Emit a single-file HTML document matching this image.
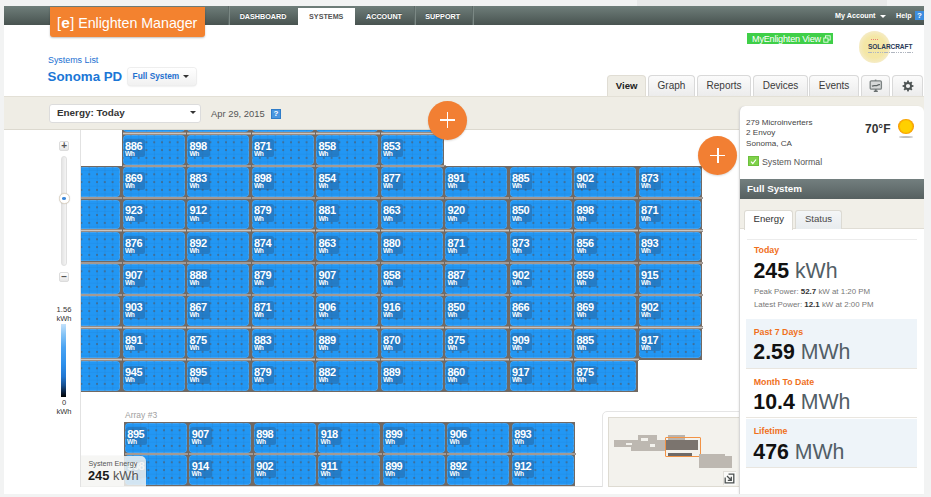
<!DOCTYPE html><html><head><meta charset="utf-8"><style>
*{margin:0;padding:0;box-sizing:border-box}
html,body{width:931px;height:497px;overflow:hidden;background:#f2f3f3;font-family:"Liberation Sans",sans-serif;position:relative}
.a{position:absolute}
#topdark{left:637px;top:0;width:250px;height:6px;background:#e8e9e9}
#page{left:4px;top:6px;width:920px;height:488px;background:#fff}
#hdr{left:4px;top:6px;width:920px;height:19px;background:linear-gradient(#6f7e7a,#485350);}
#logo{left:49.5px;top:7px;width:155px;height:29.5px;background:#f3822f;border-radius:0 0 3px 3px;box-shadow:0 1px 2px rgba(0,0,0,.25);color:#fff;font-size:14.3px;line-height:31px;padding-left:7.5px;white-space:nowrap;letter-spacing:-0.05px}
#logo b{font-weight:bold;font-size:15.5px;margin:0 0.4px}
.sep{top:6px;width:1px;height:19px;background:#5d6a67;box-shadow:1px 0 0 #7b8884}
.nav{top:6px;height:19px;color:#fff;font-weight:bold;font-size:7.2px;line-height:21.5px;text-align:center;text-shadow:0 -1px 0 rgba(0,0,0,.3)}
#systab{left:298px;top:8px;width:56.5px;height:17px;background:#fff;color:#555;font-weight:bold;font-size:7.2px;line-height:18px;text-align:center}
#acct{left:835px;top:6px;height:19px;line-height:20.5px;color:#fff;font-weight:bold;font-size:7.2px;white-space:nowrap}
#help{left:896px;top:6px;height:19px;line-height:20.5px;color:#fff;font-weight:bold;font-size:7.2px}
#helpq{left:915.4px;top:11.3px;width:8.3px;height:9px;background:#3d8ee0;color:#fff;font-weight:bold;font-size:8px;line-height:9px;text-align:center;overflow:hidden}
#mev{left:747px;top:33.2px;width:86.4px;height:11.3px;background:#3fcf48;color:#fff;font-size:9.1px;line-height:13px;padding-left:5px;white-space:nowrap;letter-spacing:-0.2px}
#sl{left:48px;top:55.3px;color:#1a70d2;font-size:8.9px;line-height:11px;white-space:nowrap}
#son{left:47.6px;top:68.8px;color:#1b76d6;font-size:13.3px;font-weight:bold;line-height:16px;white-space:nowrap}
#fsb{left:127.6px;top:67.8px;width:68px;height:17.5px;border-radius:3px;background:linear-gradient(#fff,#f1f1f1);box-shadow:0 0 0 1px #eeeeee,0 1px 2px rgba(0,0,0,.18);color:#1f70cf;font-weight:bold;font-size:8.3px;line-height:17px;padding-left:5px;white-space:nowrap}
.caret{width:0;height:0;border-left:3px solid transparent;border-right:3px solid transparent;border-top:3px solid #444}
.tab{top:74.5px;height:21.5px;border:1px solid #d9d9d9;border-bottom:none;border-radius:4px 4px 0 0;background:linear-gradient(#fbfbfb,#ececec);color:#3a3a3a;font-size:10px;line-height:19px;text-align:center;white-space:nowrap}
#tview{background:#efede5;border-color:#e0ddd4;color:#222;font-weight:bold;font-size:9.6px}
#tbar{left:4px;top:96px;width:920px;height:34px;background:#efede5;border-top:1px solid #e3e0d6;border-bottom:1px solid #dcd9cf}
#dd{left:49px;top:103.6px;width:152px;height:19px;background:#fff;border:1px solid #dcdcdc;border-radius:3px;color:#333;font-weight:bold;font-size:9.9px;line-height:15.5px;padding-left:7px;white-space:nowrap}
#date{left:211px;top:107.6px;color:#555;font-size:9.4px;line-height:12px;white-space:nowrap}
#dq{left:270.7px;top:108.9px;width:10.3px;height:10.1px;background:#4996df;border:1px solid #2f7cc8;color:#fff;font-weight:bold;font-size:8px;line-height:8.5px;text-align:center}
#leftcol{left:4px;top:130px;width:77px;height:357px;background:#fff;border-right:1px solid #e2e2e2}
#zplus,#zminus{left:58.9px;width:10.5px;height:10px;background:linear-gradient(#fff,#e6e6e6);border:1px solid #dcdcdc;border-radius:2px;color:#555;font-weight:bold;font-size:10px;line-height:8px;text-align:center}
#zplus{top:140.5px}
#zminus{top:272px}
#track{left:61px;top:156px;width:6.4px;height:110px;background:linear-gradient(90deg,#e4e4e4,#f4f4f4);border:1px solid #e0e0e0;border-radius:3px}
#knob{left:59px;top:193.3px;width:10.5px;height:10.5px;border-radius:50%;background:#fff;border:1px solid #e0d7c8;box-shadow:0 0 1px rgba(0,0,0,.2)}
#knob:after{content:"";position:absolute;left:2.2px;top:3.2px;width:4.2px;height:2.6px;border-radius:50%;background:#3b87d8}
.lg{left:50px;width:28px;text-align:center;color:#333;font-size:7.6px;line-height:8.5px}
#cbar{left:61.3px;top:324px;width:5px;height:73px;background:linear-gradient(#c4e2fb,#86c4f6 14%,#4aa3f2 32%,#2d90ec 55%,#2277d2 72%,#17508f 84%,#0b2240 93%,#000)}
#vp{left:81px;top:130px;width:658px;height:357px;overflow:hidden;background:#fff}
.cell{position:absolute;background:#716963}
.band:before{content:'';position:absolute;left:1px;top:0;width:100%;height:2.6px;background:linear-gradient(#7e7068,#c9c4bf 50%,#7e7068)}
.pn{position:absolute;width:62.4px;height:29.7px;border-radius:4px;background-color:#2297f4;box-shadow:inset 0 0 0 0.7px rgba(150,200,240,.35);
 background-image:radial-gradient(circle at 50% 50%,rgba(85,85,90,.75) 0,rgba(85,85,90,.55) 0.7px,rgba(0,0,0,0) 1.3px),linear-gradient(90deg,rgba(30,90,150,.12) 0.8px,transparent 0.8px),linear-gradient(rgba(30,90,150,.1) 0.8px,transparent 0.8px);
 background-size:7.8px 7.8px,7.8px 7.8px,7.8px 7.8px;background-position:-3.9px 3.4px,-0.3px 0,0 3.05px}
.bd{position:absolute;left:1.0px;top:4.6px;width:21.5px;height:18px;background:rgba(40,70,110,.32);border-radius:2.5px;color:#fff}
.bd b{position:absolute;left:1.6px;top:1.4px;font-size:11px;line-height:10px;font-weight:bold;letter-spacing:-0.4px}
.bd i{position:absolute;left:1.4px;top:10.5px;font-style:normal;font-weight:bold;font-size:6.6px;line-height:7px;letter-spacing:-0.3px}
.plus{width:39.3px;height:39.3px;border-radius:50%;background:#f27f33;box-shadow:0 1px 2px rgba(0,0,0,.15)}
.plus:before{content:"";position:absolute;left:11.7px;top:18.7px;width:15.6px;height:1.7px;background:#fff}
.plus:after{content:"";position:absolute;left:18.7px;top:11.7px;width:1.7px;height:15.6px;background:#fff}
#a3{left:44px;top:279.5px;color:#a0a0a0;font-size:8.5px;line-height:11px}
#sysE{left:0px;top:326px;width:65px;height:30.5px;background:rgba(244,244,242,.84);border-radius:0 5px 0 0;box-shadow:0 0 1px rgba(0,0,0,.25)}
#sysE .t{position:absolute;left:7.5px;top:3px;color:#555;font-size:7.2px;line-height:9px;white-space:nowrap}
#sysE .v{position:absolute;left:7px;top:13px;color:#555;font-size:12.8px;line-height:14px;white-space:nowrap}
#sysE .v b{color:#1a1a1a}
#mm{left:521px;top:281px;width:140px;height:80px;background:#fff;border:1px solid #e5e5e5;border-radius:5px 0 0 0}
#mmi{left:526.6px;top:286.6px;width:132px;height:70.2px;background:#f3f2ed;border:1px solid #dedbd2}
#side{left:739px;top:106px;width:185px;height:388px;background:#fff;border-left:1px solid #d8d8d8;border-radius:6px 6px 0 0;box-shadow:-1px 0 2px rgba(0,0,0,.06)}
.st{color:#444;font-size:8.1px;line-height:10.5px;white-space:nowrap}
#fsbar{left:740px;top:178.8px;width:184px;height:20.5px;background:linear-gradient(#737f7f,#566060);color:#fff;font-weight:bold;font-size:9.8px;line-height:19.5px;padding-left:7px}
#tabsbg{left:740px;top:199.3px;width:184px;height:29.5px;background:#f1efe8;border-bottom:1px solid #e0ddd5}
.etab{top:210.3px;height:19px;border:1px solid #dcdad3;border-bottom:none;border-radius:3px 3px 0 0;font-size:9.6px;line-height:17px;text-align:center;color:#333}
.lbl{color:#f0701c;font-weight:bold;font-size:8.8px;line-height:11px;white-space:nowrap}
.big{color:#111;font-size:21.3px;line-height:22px;white-space:nowrap}
.big b{font-weight:bold}
.big span{color:#525e66}
.box{left:746.4px;width:171px;background:#eef4f9;border-bottom:1px solid #e9e6e0}
.pp{color:#777;font-size:7.9px;line-height:10px;white-space:nowrap}
.pp b{color:#333}
</style></head><body>
<div class="a" id="topdark"></div>
<div class="a" id="page"></div>
<div class="a" id="hdr"></div>
<div class="a sep" style="left:228px"></div>
<div class="a sep" style="left:413.7px"></div>
<div class="a sep" style="left:471.5px"></div>
<div class="a nav" style="left:228px;width:70px">DASHBOARD</div>
<div class="a" id="systab">SYSTEMS</div>
<div class="a nav" style="left:354.5px;width:59px">ACCOUNT</div>
<div class="a nav" style="left:413.7px;width:58px">SUPPORT</div>
<div class="a" id="acct">My Account</div>
<div class="a caret" style="left:880px;top:14.5px;border-top-color:#fff"></div>
<div class="a" id="help">Help</div>
<div class="a" id="helpq">?</div>
<div class="a" id="logo">[<b>e</b>] Enlighten Manager</div>
<div class="a" id="mev">MyEnlighten View</div>
<svg class="a" style="left:823px;top:35px" width="8" height="8" viewBox="0 0 8 8"><rect x="2.5" y="0.8" width="4.7" height="4.2" fill="none" stroke="#e8ffe8" stroke-width="0.9"/><rect x="0.8" y="3" width="4.2" height="4.2" fill="#3fcf48" stroke="#e8ffe8" stroke-width="0.9"/></svg>
<div class="a" style="left:858.5px;top:31.2px;width:31.5px;height:31.5px;border-radius:50%;background:radial-gradient(circle,#f4e7a6 48%,#f5ebc3 70%,rgba(255,255,255,0) 100%)"></div>
<div class="a" style="left:868px;top:42.9px;color:#2b3a58;font-weight:bold;font-size:8px;line-height:8px;letter-spacing:-0.1px;transform:scaleX(.82);transform-origin:0 0;white-space:nowrap">SOLARCRAFT</div>
<div class="a" style="left:868px;top:51.8px;width:44.5px;height:1.2px;background:repeating-linear-gradient(90deg,#b0b6c0 0 1.5px,transparent 1.5px 2.3px)"></div>
<div class="a" style="left:871px;top:38.7px;width:7px;height:1px;border-top:1px dotted #ea8070"></div>
<div class="a" id="sl">Systems List</div>
<div class="a" id="son">Sonoma PD</div>
<div class="a" id="fsb">Full System</div>
<div class="a caret" style="left:183px;top:75px;border-top-color:#333"></div>
<div class="a" id="tbar"></div>
<div class="a tab" id="tview" style="left:607px;width:39.4px">View</div>
<div class="a tab" style="left:648px;width:47px">Graph</div>
<div class="a tab" style="left:697px;width:54.2px">Reports</div>
<div class="a tab" style="left:753px;width:55px">Devices</div>
<div class="a tab" style="left:809.3px;width:49.6px">Events</div>
<div class="a tab" style="left:860.8px;width:29.6px"></div>
<div class="a tab" style="left:892.3px;width:30.7px"></div>
<svg class="a" style="left:868px;top:79px" width="16" height="14" viewBox="0 0 16 14"><rect x="2.2" y="1.8" width="11.2" height="8.4" rx="1.2" fill="#d6d8d8" stroke="#7c8282" stroke-width="1.3"/><path d="M4 7.2C6 5.8 8 7.4 9.5 6.2S11.5 5.8 12 5.6" fill="none" stroke="#5b6262" stroke-width="1.2"/><rect x="6.8" y="0.6" width="1.6" height="1.4" fill="#7c8282"/><rect x="6.9" y="10.2" width="1.8" height="2" fill="#6a7070"/><rect x="5.8" y="11.6" width="4" height="1.4" fill="#6a7070"/></svg>
<svg class="a" style="left:902px;top:79.5px" width="12" height="12" viewBox="0 0 12 12"><g fill="#4d5353"><circle cx="6" cy="6" r="4"/><rect x="5.1" y="0.6" width="1.8" height="10.8"/><rect x="0.6" y="5.1" width="10.8" height="1.8"/><rect x="5.1" y="0.6" width="1.8" height="10.8" transform="rotate(45 6 6)"/><rect x="5.1" y="0.6" width="1.8" height="10.8" transform="rotate(-45 6 6)"/></g><circle cx="6" cy="6" r="2.1" fill="#f3f3f3"/></svg>
<div class="a" id="dd">Energy: Today</div>
<div class="a caret" style="left:190px;top:110.8px;border-top-color:#333;border-left-width:3.5px;border-right-width:3.5px;border-top-width:3.5px"></div>
<div class="a" id="date">Apr 29, 2015</div>
<div class="a" id="dq">?</div>
<div class="a" id="leftcol"></div>
<div class="a" id="track"></div>
<div class="a" id="zplus">+</div>
<div class="a" id="zminus">&minus;</div>
<div class="a" id="knob"></div>
<div class="a lg" style="top:306px">1.56</div>
<div class="a lg" style="top:315px">kWh</div>
<div class="a" id="cbar"></div>
<div class="a lg" style="top:399px">0</div>
<div class="a lg" style="top:408px">kWh</div>
<div class="a" id="vp">
<div class="cell" style="left:40.5px;top:-28.5px;width:65.5px;height:31.8px"></div>
<div class="cell" style="left:105.0px;top:-28.5px;width:65.5px;height:31.8px"></div>
<div class="cell" style="left:169.5px;top:-28.5px;width:65.5px;height:31.8px"></div>
<div class="cell" style="left:234.0px;top:-28.5px;width:65.5px;height:31.8px"></div>
<div class="cell" style="left:298.5px;top:-28.5px;width:64.7px;height:31.8px"></div>
<div class="cell band" style="left:40.5px;top:2.3px;width:65.5px;height:33.3px"></div>
<div class="cell band" style="left:105.0px;top:2.3px;width:65.5px;height:33.3px"></div>
<div class="cell band" style="left:169.5px;top:2.3px;width:65.5px;height:33.3px"></div>
<div class="cell band" style="left:234.0px;top:2.3px;width:65.5px;height:33.3px"></div>
<div class="cell band" style="left:298.5px;top:2.3px;width:64.7px;height:33.3px"></div>
<div class="cell" style="left:-24.0px;top:36.1px;width:65.5px;height:31.8px"></div>
<div class="cell band" style="left:40.5px;top:34.6px;width:65.5px;height:33.3px"></div>
<div class="cell band" style="left:105.0px;top:34.6px;width:65.5px;height:33.3px"></div>
<div class="cell band" style="left:169.5px;top:34.6px;width:65.5px;height:33.3px"></div>
<div class="cell band" style="left:234.0px;top:34.6px;width:65.5px;height:33.3px"></div>
<div class="cell band" style="left:298.5px;top:34.6px;width:65.5px;height:33.3px"></div>
<div class="cell" style="left:363.0px;top:36.1px;width:65.5px;height:31.8px"></div>
<div class="cell" style="left:427.5px;top:36.1px;width:65.5px;height:31.8px"></div>
<div class="cell" style="left:492.0px;top:36.1px;width:65.5px;height:31.8px"></div>
<div class="cell" style="left:556.5px;top:36.1px;width:64.7px;height:31.8px"></div>
<div class="cell band" style="left:-24.0px;top:66.9px;width:65.5px;height:33.3px"></div>
<div class="cell band" style="left:40.5px;top:66.9px;width:65.5px;height:33.3px"></div>
<div class="cell band" style="left:105.0px;top:66.9px;width:65.5px;height:33.3px"></div>
<div class="cell band" style="left:169.5px;top:66.9px;width:65.5px;height:33.3px"></div>
<div class="cell band" style="left:234.0px;top:66.9px;width:65.5px;height:33.3px"></div>
<div class="cell band" style="left:298.5px;top:66.9px;width:65.5px;height:33.3px"></div>
<div class="cell band" style="left:363.0px;top:66.9px;width:65.5px;height:33.3px"></div>
<div class="cell band" style="left:427.5px;top:66.9px;width:65.5px;height:33.3px"></div>
<div class="cell band" style="left:492.0px;top:66.9px;width:65.5px;height:33.3px"></div>
<div class="cell band" style="left:556.5px;top:66.9px;width:64.7px;height:33.3px"></div>
<div class="cell band" style="left:-24.0px;top:99.2px;width:65.5px;height:33.3px"></div>
<div class="cell band" style="left:40.5px;top:99.2px;width:65.5px;height:33.3px"></div>
<div class="cell band" style="left:105.0px;top:99.2px;width:65.5px;height:33.3px"></div>
<div class="cell band" style="left:169.5px;top:99.2px;width:65.5px;height:33.3px"></div>
<div class="cell band" style="left:234.0px;top:99.2px;width:65.5px;height:33.3px"></div>
<div class="cell band" style="left:298.5px;top:99.2px;width:65.5px;height:33.3px"></div>
<div class="cell band" style="left:363.0px;top:99.2px;width:65.5px;height:33.3px"></div>
<div class="cell band" style="left:427.5px;top:99.2px;width:65.5px;height:33.3px"></div>
<div class="cell band" style="left:492.0px;top:99.2px;width:65.5px;height:33.3px"></div>
<div class="cell band" style="left:556.5px;top:99.2px;width:64.7px;height:33.3px"></div>
<div class="cell band" style="left:-24.0px;top:131.5px;width:65.5px;height:33.3px"></div>
<div class="cell band" style="left:40.5px;top:131.5px;width:65.5px;height:33.3px"></div>
<div class="cell band" style="left:105.0px;top:131.5px;width:65.5px;height:33.3px"></div>
<div class="cell band" style="left:169.5px;top:131.5px;width:65.5px;height:33.3px"></div>
<div class="cell band" style="left:234.0px;top:131.5px;width:65.5px;height:33.3px"></div>
<div class="cell band" style="left:298.5px;top:131.5px;width:65.5px;height:33.3px"></div>
<div class="cell band" style="left:363.0px;top:131.5px;width:65.5px;height:33.3px"></div>
<div class="cell band" style="left:427.5px;top:131.5px;width:65.5px;height:33.3px"></div>
<div class="cell band" style="left:492.0px;top:131.5px;width:65.5px;height:33.3px"></div>
<div class="cell band" style="left:556.5px;top:131.5px;width:64.7px;height:33.3px"></div>
<div class="cell band" style="left:-24.0px;top:163.8px;width:65.5px;height:33.3px"></div>
<div class="cell band" style="left:40.5px;top:163.8px;width:65.5px;height:33.3px"></div>
<div class="cell band" style="left:105.0px;top:163.8px;width:65.5px;height:33.3px"></div>
<div class="cell band" style="left:169.5px;top:163.8px;width:65.5px;height:33.3px"></div>
<div class="cell band" style="left:234.0px;top:163.8px;width:65.5px;height:33.3px"></div>
<div class="cell band" style="left:298.5px;top:163.8px;width:65.5px;height:33.3px"></div>
<div class="cell band" style="left:363.0px;top:163.8px;width:65.5px;height:33.3px"></div>
<div class="cell band" style="left:427.5px;top:163.8px;width:65.5px;height:33.3px"></div>
<div class="cell band" style="left:492.0px;top:163.8px;width:65.5px;height:33.3px"></div>
<div class="cell band" style="left:556.5px;top:163.8px;width:64.7px;height:33.3px"></div>
<div class="cell band" style="left:-24.0px;top:196.1px;width:65.5px;height:33.3px"></div>
<div class="cell band" style="left:40.5px;top:196.1px;width:65.5px;height:33.3px"></div>
<div class="cell band" style="left:105.0px;top:196.1px;width:65.5px;height:33.3px"></div>
<div class="cell band" style="left:169.5px;top:196.1px;width:65.5px;height:33.3px"></div>
<div class="cell band" style="left:234.0px;top:196.1px;width:65.5px;height:33.3px"></div>
<div class="cell band" style="left:298.5px;top:196.1px;width:65.5px;height:33.3px"></div>
<div class="cell band" style="left:363.0px;top:196.1px;width:65.5px;height:33.3px"></div>
<div class="cell band" style="left:427.5px;top:196.1px;width:65.5px;height:33.3px"></div>
<div class="cell band" style="left:492.0px;top:196.1px;width:65.5px;height:33.3px"></div>
<div class="cell band" style="left:556.5px;top:196.1px;width:64.7px;height:33.7px"></div>
<div class="cell band" style="left:-24.0px;top:228.4px;width:65.5px;height:33.7px"></div>
<div class="cell band" style="left:40.5px;top:228.4px;width:65.5px;height:33.7px"></div>
<div class="cell band" style="left:105.0px;top:228.4px;width:65.5px;height:33.7px"></div>
<div class="cell band" style="left:169.5px;top:228.4px;width:65.5px;height:33.7px"></div>
<div class="cell band" style="left:234.0px;top:228.4px;width:65.5px;height:33.7px"></div>
<div class="cell band" style="left:298.5px;top:228.4px;width:65.5px;height:33.7px"></div>
<div class="cell band" style="left:363.0px;top:228.4px;width:65.5px;height:33.7px"></div>
<div class="cell band" style="left:427.5px;top:228.4px;width:65.5px;height:33.7px"></div>
<div class="cell band" style="left:492.0px;top:228.4px;width:64.7px;height:33.7px"></div>
<div class="pn" style="left:41.5px;top:-27.4px"></div>
<div class="pn" style="left:106.0px;top:-27.4px"></div>
<div class="pn" style="left:170.5px;top:-27.4px"></div>
<div class="pn" style="left:235.0px;top:-27.4px"></div>
<div class="pn" style="left:299.5px;top:-27.4px"></div>
<div class="pn" style="left:41.5px;top:4.9px"><span class="bd"><b>886</b><i>Wh</i></span></div>
<div class="pn" style="left:106.0px;top:4.9px"><span class="bd"><b>898</b><i>Wh</i></span></div>
<div class="pn" style="left:170.5px;top:4.9px"><span class="bd"><b>871</b><i>Wh</i></span></div>
<div class="pn" style="left:235.0px;top:4.9px"><span class="bd"><b>858</b><i>Wh</i></span></div>
<div class="pn" style="left:299.5px;top:4.9px"><span class="bd"><b>853</b><i>Wh</i></span></div>
<div class="pn" style="left:-23.0px;top:37.2px"></div>
<div class="pn" style="left:41.5px;top:37.2px"><span class="bd"><b>869</b><i>Wh</i></span></div>
<div class="pn" style="left:106.0px;top:37.2px"><span class="bd"><b>883</b><i>Wh</i></span></div>
<div class="pn" style="left:170.5px;top:37.2px"><span class="bd"><b>898</b><i>Wh</i></span></div>
<div class="pn" style="left:235.0px;top:37.2px"><span class="bd"><b>854</b><i>Wh</i></span></div>
<div class="pn" style="left:299.5px;top:37.2px"><span class="bd"><b>877</b><i>Wh</i></span></div>
<div class="pn" style="left:364.0px;top:37.2px"><span class="bd"><b>891</b><i>Wh</i></span></div>
<div class="pn" style="left:428.5px;top:37.2px"><span class="bd"><b>885</b><i>Wh</i></span></div>
<div class="pn" style="left:493.0px;top:37.2px"><span class="bd"><b>902</b><i>Wh</i></span></div>
<div class="pn" style="left:557.5px;top:37.2px"><span class="bd"><b>873</b><i>Wh</i></span></div>
<div class="pn" style="left:-23.0px;top:69.5px"></div>
<div class="pn" style="left:41.5px;top:69.5px"><span class="bd"><b>923</b><i>Wh</i></span></div>
<div class="pn" style="left:106.0px;top:69.5px"><span class="bd"><b>912</b><i>Wh</i></span></div>
<div class="pn" style="left:170.5px;top:69.5px"><span class="bd"><b>879</b><i>Wh</i></span></div>
<div class="pn" style="left:235.0px;top:69.5px"><span class="bd"><b>881</b><i>Wh</i></span></div>
<div class="pn" style="left:299.5px;top:69.5px"><span class="bd"><b>863</b><i>Wh</i></span></div>
<div class="pn" style="left:364.0px;top:69.5px"><span class="bd"><b>920</b><i>Wh</i></span></div>
<div class="pn" style="left:428.5px;top:69.5px"><span class="bd"><b>850</b><i>Wh</i></span></div>
<div class="pn" style="left:493.0px;top:69.5px"><span class="bd"><b>898</b><i>Wh</i></span></div>
<div class="pn" style="left:557.5px;top:69.5px"><span class="bd"><b>871</b><i>Wh</i></span></div>
<div class="pn" style="left:-23.0px;top:101.8px"></div>
<div class="pn" style="left:41.5px;top:101.8px"><span class="bd"><b>876</b><i>Wh</i></span></div>
<div class="pn" style="left:106.0px;top:101.8px"><span class="bd"><b>892</b><i>Wh</i></span></div>
<div class="pn" style="left:170.5px;top:101.8px"><span class="bd"><b>874</b><i>Wh</i></span></div>
<div class="pn" style="left:235.0px;top:101.8px"><span class="bd"><b>863</b><i>Wh</i></span></div>
<div class="pn" style="left:299.5px;top:101.8px"><span class="bd"><b>880</b><i>Wh</i></span></div>
<div class="pn" style="left:364.0px;top:101.8px"><span class="bd"><b>871</b><i>Wh</i></span></div>
<div class="pn" style="left:428.5px;top:101.8px"><span class="bd"><b>873</b><i>Wh</i></span></div>
<div class="pn" style="left:493.0px;top:101.8px"><span class="bd"><b>856</b><i>Wh</i></span></div>
<div class="pn" style="left:557.5px;top:101.8px"><span class="bd"><b>893</b><i>Wh</i></span></div>
<div class="pn" style="left:-23.0px;top:134.1px"></div>
<div class="pn" style="left:41.5px;top:134.1px"><span class="bd"><b>907</b><i>Wh</i></span></div>
<div class="pn" style="left:106.0px;top:134.1px"><span class="bd"><b>888</b><i>Wh</i></span></div>
<div class="pn" style="left:170.5px;top:134.1px"><span class="bd"><b>879</b><i>Wh</i></span></div>
<div class="pn" style="left:235.0px;top:134.1px"><span class="bd"><b>907</b><i>Wh</i></span></div>
<div class="pn" style="left:299.5px;top:134.1px"><span class="bd"><b>858</b><i>Wh</i></span></div>
<div class="pn" style="left:364.0px;top:134.1px"><span class="bd"><b>887</b><i>Wh</i></span></div>
<div class="pn" style="left:428.5px;top:134.1px"><span class="bd"><b>902</b><i>Wh</i></span></div>
<div class="pn" style="left:493.0px;top:134.1px"><span class="bd"><b>859</b><i>Wh</i></span></div>
<div class="pn" style="left:557.5px;top:134.1px"><span class="bd"><b>915</b><i>Wh</i></span></div>
<div class="pn" style="left:-23.0px;top:166.4px"></div>
<div class="pn" style="left:41.5px;top:166.4px"><span class="bd"><b>903</b><i>Wh</i></span></div>
<div class="pn" style="left:106.0px;top:166.4px"><span class="bd"><b>867</b><i>Wh</i></span></div>
<div class="pn" style="left:170.5px;top:166.4px"><span class="bd"><b>871</b><i>Wh</i></span></div>
<div class="pn" style="left:235.0px;top:166.4px"><span class="bd"><b>906</b><i>Wh</i></span></div>
<div class="pn" style="left:299.5px;top:166.4px"><span class="bd"><b>916</b><i>Wh</i></span></div>
<div class="pn" style="left:364.0px;top:166.4px"><span class="bd"><b>850</b><i>Wh</i></span></div>
<div class="pn" style="left:428.5px;top:166.4px"><span class="bd"><b>866</b><i>Wh</i></span></div>
<div class="pn" style="left:493.0px;top:166.4px"><span class="bd"><b>869</b><i>Wh</i></span></div>
<div class="pn" style="left:557.5px;top:166.4px"><span class="bd"><b>902</b><i>Wh</i></span></div>
<div class="pn" style="left:-23.0px;top:198.7px"></div>
<div class="pn" style="left:41.5px;top:198.7px"><span class="bd"><b>891</b><i>Wh</i></span></div>
<div class="pn" style="left:106.0px;top:198.7px"><span class="bd"><b>875</b><i>Wh</i></span></div>
<div class="pn" style="left:170.5px;top:198.7px"><span class="bd"><b>883</b><i>Wh</i></span></div>
<div class="pn" style="left:235.0px;top:198.7px"><span class="bd"><b>889</b><i>Wh</i></span></div>
<div class="pn" style="left:299.5px;top:198.7px"><span class="bd"><b>870</b><i>Wh</i></span></div>
<div class="pn" style="left:364.0px;top:198.7px"><span class="bd"><b>875</b><i>Wh</i></span></div>
<div class="pn" style="left:428.5px;top:198.7px"><span class="bd"><b>909</b><i>Wh</i></span></div>
<div class="pn" style="left:493.0px;top:198.7px"><span class="bd"><b>885</b><i>Wh</i></span></div>
<div class="pn" style="left:557.5px;top:198.7px"><span class="bd"><b>917</b><i>Wh</i></span></div>
<div class="pn" style="left:-23.0px;top:231.0px"></div>
<div class="pn" style="left:41.5px;top:231.0px"><span class="bd"><b>945</b><i>Wh</i></span></div>
<div class="pn" style="left:106.0px;top:231.0px"><span class="bd"><b>895</b><i>Wh</i></span></div>
<div class="pn" style="left:170.5px;top:231.0px"><span class="bd"><b>879</b><i>Wh</i></span></div>
<div class="pn" style="left:235.0px;top:231.0px"><span class="bd"><b>882</b><i>Wh</i></span></div>
<div class="pn" style="left:299.5px;top:231.0px"><span class="bd"><b>889</b><i>Wh</i></span></div>
<div class="pn" style="left:364.0px;top:231.0px"><span class="bd"><b>860</b><i>Wh</i></span></div>
<div class="pn" style="left:428.5px;top:231.0px"><span class="bd"><b>917</b><i>Wh</i></span></div>
<div class="pn" style="left:493.0px;top:231.0px"><span class="bd"><b>875</b><i>Wh</i></span></div>
<div class="cell" style="left:42.6px;top:291.8px;width:65.5px;height:31.8px"></div>
<div class="cell" style="left:107.1px;top:291.8px;width:65.5px;height:31.8px"></div>
<div class="cell" style="left:171.6px;top:291.8px;width:65.5px;height:31.8px"></div>
<div class="cell" style="left:236.1px;top:291.8px;width:65.5px;height:31.8px"></div>
<div class="cell" style="left:300.6px;top:291.8px;width:65.5px;height:31.8px"></div>
<div class="cell" style="left:365.1px;top:291.8px;width:65.5px;height:31.8px"></div>
<div class="cell" style="left:429.6px;top:291.8px;width:64.7px;height:31.8px"></div>
<div class="cell band" style="left:42.6px;top:322.6px;width:65.5px;height:33.7px"></div>
<div class="cell band" style="left:107.1px;top:322.6px;width:65.5px;height:33.7px"></div>
<div class="cell band" style="left:171.6px;top:322.6px;width:65.5px;height:33.7px"></div>
<div class="cell band" style="left:236.1px;top:322.6px;width:65.5px;height:33.7px"></div>
<div class="cell band" style="left:300.6px;top:322.6px;width:65.5px;height:33.7px"></div>
<div class="cell band" style="left:365.1px;top:322.6px;width:65.5px;height:33.7px"></div>
<div class="cell band" style="left:429.6px;top:322.6px;width:64.7px;height:33.7px"></div>
<div class="pn" style="left:43.6px;top:292.9px"><span class="bd"><b>895</b><i>Wh</i></span></div>
<div class="pn" style="left:108.1px;top:292.9px"><span class="bd"><b>907</b><i>Wh</i></span></div>
<div class="pn" style="left:172.6px;top:292.9px"><span class="bd"><b>898</b><i>Wh</i></span></div>
<div class="pn" style="left:237.1px;top:292.9px"><span class="bd"><b>918</b><i>Wh</i></span></div>
<div class="pn" style="left:301.6px;top:292.9px"><span class="bd"><b>899</b><i>Wh</i></span></div>
<div class="pn" style="left:366.1px;top:292.9px"><span class="bd"><b>906</b><i>Wh</i></span></div>
<div class="pn" style="left:430.6px;top:292.9px"><span class="bd"><b>893</b><i>Wh</i></span></div>
<div class="pn" style="left:43.6px;top:325.2px"><span class="bd"><b>908</b><i>Wh</i></span></div>
<div class="pn" style="left:108.1px;top:325.2px"><span class="bd"><b>914</b><i>Wh</i></span></div>
<div class="pn" style="left:172.6px;top:325.2px"><span class="bd"><b>902</b><i>Wh</i></span></div>
<div class="pn" style="left:237.1px;top:325.2px"><span class="bd"><b>911</b><i>Wh</i></span></div>
<div class="pn" style="left:301.6px;top:325.2px"><span class="bd"><b>899</b><i>Wh</i></span></div>
<div class="pn" style="left:366.1px;top:325.2px"><span class="bd"><b>892</b><i>Wh</i></span></div>
<div class="pn" style="left:430.6px;top:325.2px"><span class="bd"><b>912</b><i>Wh</i></span></div>
<div class="a" id="a3">Array #3</div>
<div class="a" style="left:0;top:356px;width:658px;height:1px;background:#dcdcdc"></div>
<div class="a" id="mm"></div>
<div class="a" id="mmi"></div>
<div class="a" style="left:533.0px;top:309.8px;width:20.0px;height:7.0px;background:#bdb8b1"></div>
<div class="a" style="left:550.1px;top:309.8px;width:34.1px;height:11.6px;background:#bdb8b1"></div>
<div class="a" style="left:556.6px;top:304.9px;width:19.6px;height:4.9px;background:#bdb8b1"></div>
<div class="a" style="left:560.0px;top:308.0px;width:7.0px;height:2.5px;background:#f3f2ed"></div>
<div class="a" style="left:569.0px;top:314.0px;width:5.0px;height:2.5px;background:#f3f2ed"></div>
<div class="a" style="left:545.0px;top:312.5px;width:5.5px;height:2.5px;background:#f3f2ed"></div>
<div class="a" style="left:587.0px;top:304.9px;width:16.5px;height:4.9px;background:#b9b4ae"></div>
<div class="a" style="left:584.9px;top:309.8px;width:31.9px;height:10.6px;background:#7b746e"></div>
<div class="a" style="left:587.0px;top:323.3px;width:23.7px;height:2.9px;background:#6e6a68"></div>
<div class="a" style="left:584.2px;top:307.3px;width:35.5px;height:19.3px;border:1px solid #f29345;border-radius:1px"></div>
<div class="a" style="left:617.5px;top:326.2px;width:33.4px;height:12.3px;background:#bdb8b1"></div>
<div class="a" style="left:617.5px;top:324.0px;width:26.9px;height:2.2px;background:#bdb8b1"></div>
<div class="a" style="left:641.5px;top:341.4px;width:13.7px;height:13.8px;background:#fafaf8;border-left:1px solid #e0ded8;border-top:1px solid #e0ded8"></div>
<svg class="a" style="left:643.2px;top:343.0px" width="11" height="11" viewBox="0 0 11 11"><path d="M1.2 4.5V9.8H9.8V1.2H4.5" fill="none" stroke="#4b5050" stroke-width="1.3"/><path d="M3 3L7.3 7.3M7.3 3.8V7.3H3.8" fill="none" stroke="#4b5050" stroke-width="1.3"/></svg>
<div class="a plus" style="left:617.2px;top:5.9px"></div>
<div class="a" id="sysE"><div class="t">System Energy</div><div class="v"><b>245</b> kWh</div></div>
</div>
<div class="a plus" style="left:427.9px;top:100.5px"></div>
<div class="a" id="side"></div>
<div class="a st" style="left:746px;top:117.6px">279 Microinverters<br>2 Envoy<br>Sonoma, CA</div>
<div class="a" style="left:865px;top:122.7px;color:#333;font-weight:bold;font-size:12px;line-height:13px">70°F</div>
<div class="a" style="left:898.4px;top:119.4px;width:15.5px;height:15.1px;border-radius:50%;background:radial-gradient(circle,#ffd000 50%,#fbb400 60%,#f39000 72%,#f08a10 100%)"></div>
<div class="a" style="left:899px;top:135.5px;width:14px;height:2px;border-radius:50%;background:rgba(0,0,0,.25)"></div>
<div class="a" style="left:747.7px;top:155.7px;width:11px;height:10.8px;background:#7fd14a;border:1px solid #6cbf3c"></div>
<svg class="a" style="left:749px;top:157px" width="9" height="9" viewBox="0 0 9 9"><path d="M2 4.6L3.8 6.5L7 2.5" fill="none" stroke="#fff" stroke-width="1.2"/></svg>
<div class="a st" style="left:762px;top:156.5px;font-size:8.8px;line-height:11px;color:#555">System Normal</div>
<div class="a" id="fsbar">Full System</div>
<div class="a" id="tabsbg"></div>
<div class="a etab" style="left:744.4px;width:48.7px;background:#fff;height:19.5px;line-height:15.5px">Energy</div>
<div class="a etab" style="left:795.3px;width:46.5px;background:linear-gradient(#f4f6f7,#e8ecee);color:#4a4a4a;line-height:15.5px">Status</div>
<div class="a" style="left:746.6px;top:238.5px;width:170.4px;height:1px;background:#ececec"></div>
<div class="a lbl" style="left:753.9px;top:244.7px">Today</div>
<div class="a big" style="left:753.5px;top:259.8px"><b>245</b> <span>kWh</span></div>
<div class="a pp" style="left:753.9px;top:287.4px">Peak Power: <b>52.7</b> kW at 1:20 PM</div>
<div class="a pp" style="left:753.9px;top:300.2px">Latest Power: <b>12.1</b> kW at 2:00 PM</div>
<div class="a box" style="top:318.7px;height:50.2px"></div>
<div class="a lbl" style="left:753.7px;top:326.5px">Past 7 Days</div>
<div class="a big" style="left:753.3px;top:341.2px"><b>2.59</b> <span>MWh</span></div>
<div class="a box" style="top:368.9px;height:49.6px;background:#fff"></div>
<div class="a lbl" style="left:753.7px;top:376.7px">Month To Date</div>
<div class="a big" style="left:753.3px;top:391.4px"><b>10.4</b> <span>MWh</span></div>
<div class="a box" style="top:418.5px;height:49.5px"></div>
<div class="a lbl" style="left:753.7px;top:426.3px">Lifetime</div>
<div class="a big" style="left:753.3px;top:441.0px"><b>476</b> <span>MWh</span></div>
</body></html>
